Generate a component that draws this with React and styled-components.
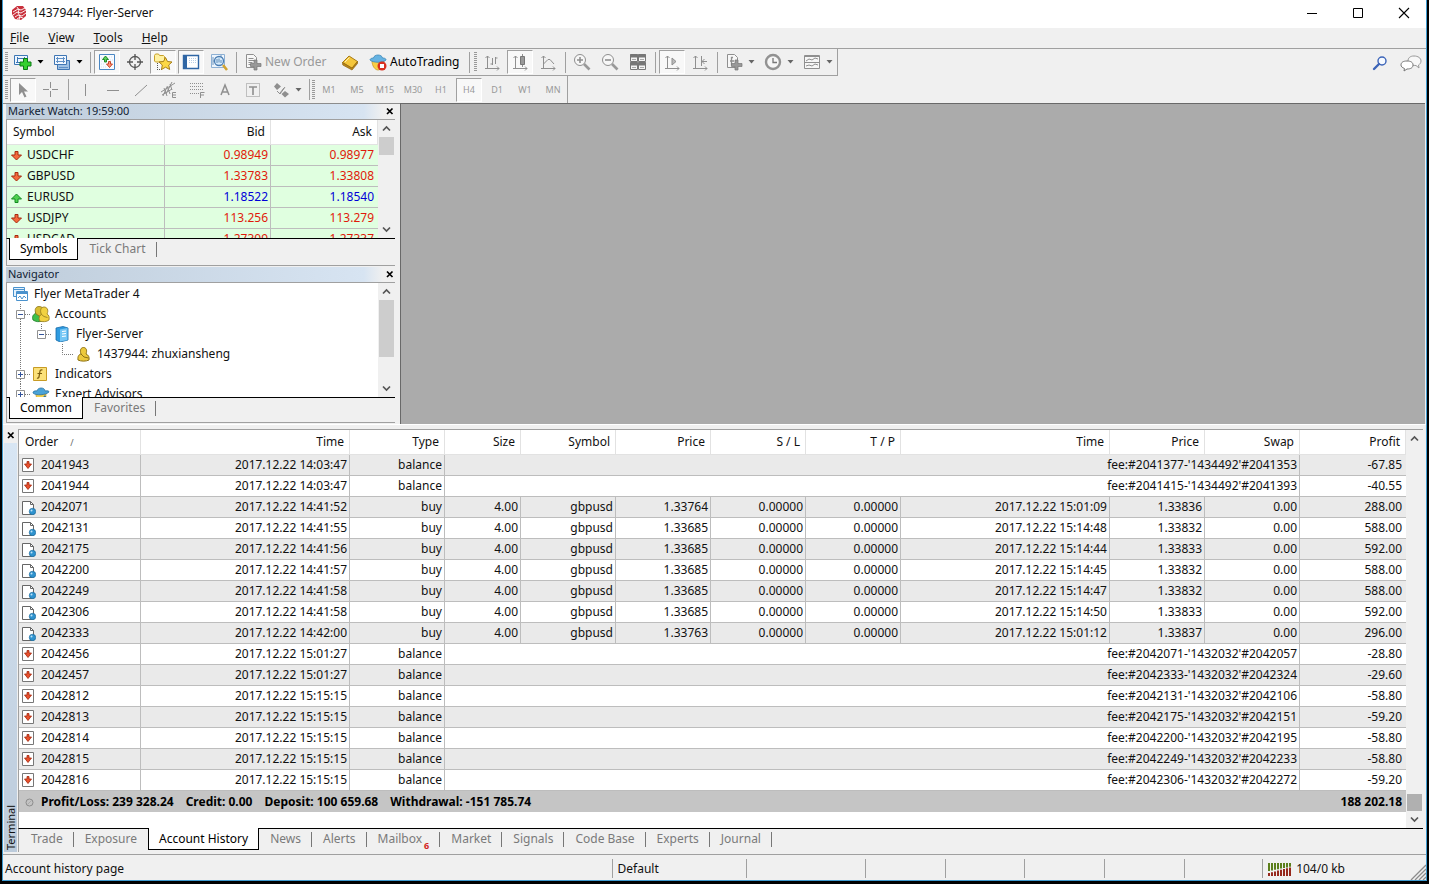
import React from "react";
import styled, { createGlobalStyle, css } from "styled-components";

const Global = createGlobalStyle`
  * { box-sizing: border-box; }
  body { margin: 0; background: #000; color: #111; font: 12px/20px "Noto Sans", "Noto Sans CJK SC", sans-serif; }
  button { font: inherit; color: inherit; background: none; border: 0; padding: 0; margin: 0; }
  table { border-collapse: separate; border-spacing: 0; table-layout: fixed; width: 100%; }
  ul { list-style: none; margin: 0; padding: 0; }
  svg { display: block; flex: none; }
`;

/* ---------- icons ---------- */
const Svg = ({ s = 18, w, h, children, ...rest }) => (
  <svg width={w || s} height={h || s} viewBox={`0 0 ${w || s} ${h || s}`} fill="none" aria-hidden="true" {...rest}>{children}</svg>
);
const G = "#8f8f8f";

const icons = {
  logo: (
    <Svg s={16}>
      <path d="M1 5 6 1l6 0 3 4v6l-5 4-6-1-3-5z" fill="#c9303c" />
      <path d="M2 7l5-3 3 1 4-2M2 10l4-3 4 1 5-3M4 12l3-2 4 1 4-3M6 14l3-2 3 1M6 2l2 3-1 3 2 3-1 4" stroke="#fff" strokeWidth=".9" />
    </Svg>
  ),
  newChart: (
    <Svg>
      <path d="M.5 2.500h13v9H.5z" fill="#eef6ff" stroke="#3c77b5" />
      <path d="M2 9.500h7M3.500 4v6M3 5.500h7M10.500 4v3" stroke="#3c77b5" />
      <path d="M9.500 5.500h4v3.500h3.500v4h-3.500v3.500h-4V13H6V9h3.500z" fill="#35d02f" stroke="#0a7a14" />
    </Svg>
  ),
  profiles: (
    <Svg>
      <path d="M4.500 7.500h12v9h-12z" fill="#9fc1e4" stroke="#3f76b4" />
      <path d="M1.500 2.500h12v9h-12z" fill="#f2f8ff" stroke="#3f76b4" />
      <path d="M4.500 4v6M10.500 4v6M3 5.500h9M3 8.500h9M6 14.500h9" stroke="#5f90c6" />
    </Svg>
  ),
  marketWatch: (
    <Svg>
      <path d="M1.500 1.500h15v15h-15z" fill="#f8fbff" stroke="#4a87c3" />
      <path d="M3 5h3M3 8h2M3 11h4M3 14h5M11 4h4M12 7h3" stroke="#d2e0ee" strokeDasharray="1 1" />
      <path d="M7.500 3 4.500 6.500h2V9h2V6.500h2z" fill="#5ad05a" stroke="#128018" strokeWidth=".9" />
      <path d="M11.500 14.500 8.500 11h2V8.500h2V11h2z" fill="#ff9478" stroke="#c23a1c" strokeWidth=".9" />
    </Svg>
  ),
  dataWindow: (
    <Svg>
      <circle cx="9" cy="9" r="5.500" stroke="#555" strokeWidth="1.300" />
      <path d="M9 1v6M9 11v6M1 9h6M11 9h6" stroke="#555" strokeWidth="1.300" />
    </Svg>
  ),
  navigator: (
    <Svg s={20}>
      <path d="M1.500 3.500l1-1.500h3l1 1.500h4l1 1v4l-1 1.500h-8l-1-1z" fill="#fff1a0" stroke="#c7a12a" />
      <path d="M4.500 11v7M4 17.500h5" stroke="#555" strokeDasharray="1 1" />
      <path d="m12.500 5.500 2 4 4.500.500-3.300 3 1 4.500-4.200-2.300-4 2.300.8-4.500-3.300-3 4.500-.5z" fill="#fcd845" stroke="#a8801a" />
    </Svg>
  ),
  terminal: (
    <Svg>
      <path d="M1.500 2.500h15v13h-15z" fill="#fff" stroke="#2f66a5" strokeWidth="1.400" />
      <path d="M2 3h3v12H2z" fill="#2f66a5" />
      <path d="M7 5.500h8M7 7.500h8M7 9.500h8" stroke="#b9cfe6" strokeDasharray="1 1" />
    </Svg>
  ),
  tester: (
    <Svg s={20}>
      <path d="M2.500 2.500h13v13h-13z" fill="#edf5fd" stroke="#8db0d4" />
      <path d="M4 5v8M4 9h4M12 3v4" stroke="#7196bd" />
      <circle cx="10" cy="9" r="4.500" fill="#d7ebfb" stroke="#4a7db2" strokeWidth="1.300" />
      <path d="M8 7v4M10 6.500v4M12 8v3" stroke="#5d8ab6" />
      <path d="m14 13 4 5" stroke="#d2a32f" strokeWidth="2.600" />
    </Svg>
  ),
  newOrder: (
    <Svg>
      <path d="M2.500 1.500h7l3 3v10h-10z" fill="#f7f7f7" stroke={G} />
      <path d="M4.500 5.500h5M4.500 7.500h6M4.500 9.500h4M4.500 11.500h3" stroke={G} />
      <path d="M10 7h3v3.500h4v3h-4V17h-3v-3.500H6.500v-3H10z" fill="#999" stroke="#777" strokeWidth=".7" />
    </Svg>
  ),
  book: (
    <Svg>
      <path d="M1.500 9.500 8 3l8.500 5.500-5.500 7z" fill="#f4c63c" stroke="#a87a12" />
      <path d="m1.500 9.500.3 2.500 9.200 5 5.500-6.500V8.500L11 15z" fill="#b98518" stroke="#8e640e" strokeWidth=".7" />
      <path d="m4 9 4.500-4.500" stroke="#fdeeb0" />
    </Svg>
  ),
  auto: (
    <Svg>
      <path d="M3 8c0 5 3 9 6 9s6-4 6-9z" fill="#f8cf45" stroke="#c39320" strokeWidth=".7" />
      <path d="M4.500 5C5 1 13 1 13.500 5c3 0 3.500 1 3.500 2-3 3-13 3-16 0 0-1 1-2 3.500-2z" fill="#66b3e2" stroke="#3a86b8" strokeWidth=".8" />
      <circle cx="13" cy="13" r="4.500" fill="#d9301f" /><path d="M11 11h4v4h-4z" fill="#fff" />
    </Svg>
  ),
  bars: (
    <Svg><path d="M4.500 3v12.500H16M2.500 5l2-2 2 2M14 13.500l2 2-2 2M9.500 5v7M9.500 11h-2M12.500 4v7M12.500 5h2M2 15.500h3" stroke={G} /></Svg>
  ),
  candles: (
    <Svg><path d="M4.500 3v12.500H16M2.500 5l2-2 2 2M14 13.500l2 2-2 2M2 15.500h3M11.500 1v13" stroke={G} /><path d="M9.500 3.500h4v8h-4z" fill="#999" stroke="#777" /></Svg>
  ),
  line: (
    <Svg><path d="M4.500 3v12.500H16M2.500 5l2-2 2 2M14 13.500l2 2-2 2M2 15.500h3M4.500 11 9 6.500h2L15 11" stroke={G} /></Svg>
  ),
  zoomIn: (
    <Svg><circle cx="7" cy="7" r="5.500" fill="#f7f7f7" stroke={G} /><path d="M4 7h6M7 4v6" stroke={G} strokeWidth="1.600" /><path d="m11 11 5.500 5.500" stroke="#999" strokeWidth="2.600" /></Svg>
  ),
  zoomOut: (
    <Svg><circle cx="7" cy="7" r="5.500" fill="#f7f7f7" stroke={G} /><path d="M4 7h6" stroke={G} strokeWidth="1.600" /><path d="m11 11 5.500 5.500" stroke="#999" strokeWidth="2.600" /></Svg>
  ),
  tile: (
    <Svg>
      <path d="M1.500 1.500h7v7h-7zM9.500 1.500h7v7h-7zM1.500 9.500h7v7h-7zM9.500 9.500h7v7h-7z" fill="#f4f4f4" stroke="#777" />
      <path d="M1 3h16M1 11h16" stroke="#777" strokeWidth="3" /><path d="M3 6.500h4M11 6.500h4M3 14.500h4M11 14.500h4" stroke="#aaa" />
    </Svg>
  ),
  autoScroll: (
    <Svg><path d="M4.500 3v12.500H16M2.500 5l2-2 2 2M14 13.500l2 2-2 2M2 15.500h3" stroke={G} /><path d="m9 5 4 3.500L9 12z" fill="#bbb" stroke={G} /></Svg>
  ),
  shift: (
    <Svg><path d="M4.500 3v12.500H16M2.500 5l2-2 2 2M14 13.500l2 2-2 2M2 15.500h3M10.500 3v10M11 8.500h5M13.500 6 11 8.500l2.500 2.500" stroke={G} /></Svg>
  ),
  indicators: (
    <Svg>
      <path d="M2.500 1.500h7l3 3v10h-10z" fill="#f7f7f7" stroke={G} /><path d="M8 4.500H6.500v8M5 8h4" stroke={G} strokeWidth="1.300" />
      <path d="M10 7h3v3.500h4v3h-4V17h-3v-3.500H6.500v-3H10z" fill="#999" stroke="#777" strokeWidth=".7" />
    </Svg>
  ),
  periods: (
    <Svg><circle cx="9" cy="9" r="7" fill="#f6f6f6" stroke="#929292" strokeWidth="2.400" /><path d="M9 5v4.500h4" stroke="#777" strokeWidth="1.300" /></Svg>
  ),
  templates: (
    <Svg><path d="M1.500 2.500h15v13h-15z" fill="#f7f7f7" stroke={G} /><path d="M2 3.500h14M2 9.500h14" stroke={G} /><path d="m3 8 3-2 3 1 3-2 3 1M3 13l3-1 3 1 3-2 3 1" stroke={G} /></Svg>
  ),
  cursor: (<Svg><path d="M5 2v12l3-3 2.500 5.500 2-1L10 10.500h4z" fill={G} /></Svg>),
  cross: (<Svg><path d="M8.500 1v6M8.500 10v6M1 8.500h6M10 8.500h6" stroke={G} /></Svg>),
  vline: (<Svg><path d="M9.500 3v12" stroke={G} /></Svg>),
  hline: (<Svg><path d="M3 9.500h12" stroke={G} /></Svg>),
  trend: (<Svg><path d="M3 15 15 4" stroke={G} /></Svg>),
  channel: (<Svg><path d="m1 11 14-9M2 14l10-6M4 7l3 8M7 5l3 8M10 3l2 6M3 15l4-9M6 13l6-12" stroke={G} /><path d="M16 11.500h-3.500v5H16M13 14h3" stroke={G} /></Svg>),
  fibo: (<Svg><path d="M2 2.500h14M2 5.500h14M2 8.500h14M2 12.500h9" stroke={G} strokeDasharray="1 1" /><path d="M16.500 11.500h-4V17M13 14h3" stroke={G} /></Svg>),
  text: (<Svg><path d="m5 14 4-10 4 10M6.500 11h5" stroke={G} strokeWidth="1.500" /></Svg>),
  label: (<Svg><path d="M2.500 2.500h13v13h-13z" stroke={G} strokeDasharray="1 1" /><path d="M5 6h8M9 6v8" stroke={G} strokeWidth="1.600" /></Svg>),
  arrows: (<Svg><path d="m5 2 4 3.500-4 3.500-3-3.500zM13 10l4 3-4 3.500-3.500-3.500z" fill={G} /><path d="m8 12 4-5M5 10l3 3 5-7" stroke={G} /></Svg>),
  search: (<Svg s={16}><circle cx="10" cy="6" r="4" fill="#f6faff" stroke="#3c64b8" strokeWidth="1.400" /><path d="m7 9-5 5" stroke="#3c64b8" strokeWidth="2.400" strokeLinecap="round" /></Svg>),
  chat: (
    <Svg w={22} h={18}>
      <path d="M14 2c4 0 7 2 7 5 0 2-1 3-2.500 4l.5 3-3-2.500c-5 0-8-2-8-4.500 0-3 2-5 6-5z" fill="#f8f8f8" stroke="#999" />
      <path d="M7 7c4 0 6 1.500 6 4s-2 4-6 4l-3 2 .5-2.500C2 13.500 1 12.500 1 11c0-2.500 2-4 6-4z" fill="#fff" stroke="#777" />
    </Svg>
  ),
  down: (<Svg w={11} h={11}><path d="M4 1.500h3V5h3.500L5.500 10 .5 5H4z" fill="#f36a3c" stroke="#a72a10" /></Svg>),
  up: (<Svg w={11} h={11}><path d="M4 10.500h3V7h3.500L5.500 2 .5 7H4z" fill="#4fd04f" stroke="#128a20" /></Svg>),
  root: (
    <Svg s={16}>
      <path d="M.5 1.500h11v9H.5z" fill="#e4f2fd" stroke="#4a92cd" /><path d="M.5 3.500h11" stroke="#4a92cd" />
      <path d="M3.500 5.500h11v9h-11z" fill="#fff" stroke="#4a92cd" /><path d="M3.500 7h11" stroke="#4a92cd" strokeWidth="2" /><path d="m5 12 2-2 2 3 2-3 2 2" stroke="#4a92cd" />
    </Svg>
  ),
  accounts: (
    <Svg>
      <path d="M1 15c-1.500-4 1-6 2.500-6.500 0-2 1-3 3-3s3 2 2.500 4L10 16c-3 1-6 1-9-1z" fill="#3fbf4a" stroke="#1b7b25" strokeWidth=".8" />
      <path d="M4 9C2 4 4 1.500 7 1.500s4 1.500 4 4l-1 7z" fill="#d8bd32" stroke="#8d7414" strokeWidth=".8" />
      <path d="M7.500 16c-1-4 0-5.500 2-6.500-2-4-.5-7.500 2.500-7.500s5 3 3 7c2 1 2.500 3 2 6-2 2-7 2-9.500 1z" fill="#f2d241" stroke="#92771a" strokeWidth=".8" />
      <path d="m9.500 9.500 2.500 2 3.500 1" stroke="#92771a" strokeWidth=".8" />
    </Svg>
  ),
  server: (
    <Svg s={16}>
      <path d="M2 2 9 .5 14 2v12l-8 2-4-2z" fill="#2f9be0" stroke="#186ba8" strokeWidth=".8" /><path d="M6 3.500 13.500 2v12L6 15.500z" fill="#74c6f5" />
      <path d="M8 5.500 12 5M8 8l4-.5M8 10.500l4-.5" stroke="#fff" strokeWidth="1.200" />
    </Svg>
  ),
  user: (
    <Svg s={16}>
      <path d="M2 14c-.5-4 1-5.500 3-6C3.500 4 5 1.500 7.500 1.500S11.500 4 10 8c2.500 1 3.500 3 3 6-3 1.500-8 1.500-11 0z" fill="#ecc93d" stroke="#8d7114" />
      <path d="m5 8 3 3 4.500 1" stroke="#8d7114" />
    </Svg>
  ),
  fn: (
    <Svg s={16}><path d="M1.500 1.500h13v13h-13z" fill="#fbe17a" stroke="#c79b25" /><path d="M10.500 4c-2-.5-2.500.5-2.700 2L7 11c-.3 1-1 1.500-2 1M5.500 7.500H10" stroke="#7a5a0c" strokeWidth="1.200" /></Svg>
  ),
  expert: (
    <Svg>
      <path d="M4 9c0 4 2 7 5 7s5-3 5-7z" fill="#f5d04a" stroke="#b98e20" strokeWidth=".7" />
      <path d="M5 6c.5-4 8-4 8 0 3-.5 4 0 4 1-3 3-13 4-16 1 0-1.500 1-2.500 4-2z" fill="#4aa3d8" stroke="#2c74a3" strokeWidth=".8" /><path d="m12 11 5 5" stroke="#2c74a3" strokeWidth="2" />
    </Svg>
  ),
  balance: (
    <Svg w={14} h={14}><path d="M.5.5h11v13H.5z" fill="#fff" stroke="#777" /><path d="M5 3.500h2V6h2.500L6 10.500 2.500 6H5z" fill="#e8502c" stroke="#a3260c" strokeWidth=".8" /></Svg>
  ),
  trade: (
    <Svg w={14} h={15}><path d="M.5 1.500h8l3 3v10H.5z" fill="#fff" stroke="#666" /><path d="M8.500 1.500v3h3" stroke="#666" /><circle cx="10.500" cy="11.500" r="3.200" fill="#2f93cf" stroke="#1c6a9c" strokeWidth=".7" /><circle cx="9.500" cy="10.500" r="1" fill="#bfe3f7" /></Svg>
  ),
  dot: (<Svg w={14} h={14}><circle cx="7.500" cy="7.500" r="3.500" fill="#c3c3c3" stroke="#8c8c8c" /><path d="m5.500 9.500 4-4" stroke="#aaa" /></Svg>),
  close: (<Svg s={8}><path d="m1 1.500 5.500 5.500M6.500 1.500 1 7" stroke="#000" strokeWidth="1.700" /></Svg>),
  caret: (<Svg w={7} h={4}><path d="M.5 0h6L3.500 3.500z" fill="currentColor" /></Svg>),
  chevUp: (<Svg w={9} h={7}><path d="m1 5.500 3.500-3.500L8 5.500" stroke="#555" strokeWidth="1.700" /></Svg>),
  chevDown: (<Svg w={9} h={7}><path d="m1 1.500 3.500 3.500L8 1.500" stroke="#555" strokeWidth="1.700" /></Svg>),
  min: (<Svg s={12}><path d="M1 6.500h10" stroke="#000" /></Svg>),
  max: (<Svg s={12}><path d="M1.500 1.500h9v9h-9z" stroke="#000" /></Svg>),
  exit: (<Svg s={12}><path d="m1 1 10 10M11 1 1 11" stroke="#000" strokeWidth="1.100" /></Svg>),
  traffic: (
    <Svg w={24} h={14}>
      {[0, 1, 2, 3, 4, 5, 6, 7].map((i) => (
        <React.Fragment key={i}>
          <path d={`M${i * 3 + 1} 1V${9 - i * 0.6}`} stroke="#5c7f1c" strokeWidth="2" />
          <path d={`M${i * 3 + 1} ${11 - i * 0.8}V14`} stroke="#96281c" strokeWidth="2" />
        </React.Fragment>
      ))}
    </Svg>
  ),
  sizer: (<Svg s={16}><path d="M1 16 16 1M5 16 16 5M9 16 16 9M13 16l3-3" stroke="#8c8c8c" strokeWidth="1.300" /></Svg>),
};

const guides = {
  blank: null,
  line: <path d="M10.500 0v20" />,
  corner: <path d="M10.500 0v10.500H21" />,
  minus: <path d="M10.500 0v6M15 10.500h6" />,
  minusLine: <path d="M10.500 0v6M10.500 15v5M15 10.500h6" />,
  plusLine: <path d="M10.500 0v6M10.500 15v5M15 10.500h6" />,
};
const Guide = ({ type }) => (
  <Svg w={21} h={20}>
    <g stroke="#777" strokeDasharray="1 1">{guides[type]}</g>
    {/inus|plus/.test(type) && <path d="M6.500 6.500h8v8h-8z" fill="#fff" stroke="#919191" />}
    {/inus|plus/.test(type) && <path d="M8 10.500h5" stroke="#33549c" />}
    {/plus/.test(type) && <path d="M10.500 8v5" stroke="#33549c" />}
  </Svg>
);

/* ---------- window frame ---------- */
const Win = styled.div`
  margin: 0 2px 3px 2px; min-height: calc(100vh - 3px); background: #f0f0f0;
  border: solid #3f9bd0; border-width: 0 1px 1px; display: flex; flex-direction: column;
`;
const TitleBar = styled.header`
  display: flex; align-items: center; height: 28px; padding: 0 2px 3px 8px; background: #fff; gap: 5px;
`;
const Title = styled.h1`font: inherit; margin: 0; flex: 1;`;
const WinButton = styled.button`width: 41px; height: 25px; display: grid; place-items: center;`;
const MenuBar = styled.nav`display: flex; height: 21px; padding: 0 7px; gap: 19px; border-bottom: 1px solid #a0a0a0;`;
const MenuItem = styled.button`&::first-letter { text-decoration: underline; }`;

const ToolLine = styled.div`display: flex; justify-content: space-between; height: 27px;`;
const ToolGroup = styled.div`
  display: flex; align-items: center; height: 27px; color: ${(p) => (p.$dim ? "#666" : "#000")};
  border: solid #a0a0a0; border-width: 0 1px ${(p) => (p.$flat ? 0 : 1)}px 0;
`;
const Grip = styled.span`
  width: 3px; height: 20px; margin: 0 ${(p) => (p.$tight ? 0 : 1)}px 0 ${(p) => (p.$tight ? 0 : 2)}px;
  background: repeating-linear-gradient(#999 0 1px, #f0f0f0 1px 2px);
`;
const Sep = styled.span`width: 1px; height: 21px; margin: 0 2px 0 3px; background: #a0a0a0;`;
const Tool = styled.button`
  width: 28px; height: 24px; display: grid; place-items: center; flex: none;
  ${(p) => p.$on && css`
    width: 26px; margin: 0 1px; background: #f8f8f8; border: 1px solid; border-color: #a0a0a0 #fff #fff #a0a0a0;
  `}
`;
const Drop = styled.button`
  width: 11px; height: 24px; display: flex; align-items: center; color: ${(p) => (p.$dim ? "#666" : "inherit")};
`;
const TextTool = styled.button`
  display: flex; align-items: center; width: ${(p) => p.$w}px; height: 24px; padding-left: 5px; gap: 3px;
  font-size: 12px; color: ${(p) => (p.disabled ? "#999" : "#000")}; white-space: nowrap;
`;
const Period = styled(Tool)`font-size: 9px; line-height: 12px; color: #999;`;
const Right = styled.div`display: flex; align-items: center; gap: 12px; padding-right: 4px;`;

/* ---------- docked panels ---------- */
const Work = styled.main`display: flex; padding-right: 1px;`;
const Dock = styled.aside`width: 397px; flex: none; padding: 0 5px 0 3px; border-top: 1px solid #8c8c8c;`;
const Canvas = styled.section`flex: 1; background: #ababab; border: solid #696969; border-width: 1px 0 0 1px;`;
const Panel = styled.section`border-bottom: 1px solid #a0a0a0; margin-bottom: 1px;`;
const PanelTitle = styled.h2`
  margin: 0; height: 15px; display: flex; align-items: center; justify-content: space-between;
  padding: 0 1px 1px 2px; font: 11px/14px "Noto Sans", sans-serif; color: #123;
  background: linear-gradient(90deg, #bfcddb, #d7e4f2 92%, #f0f0f0 97%);
`;
const CloseButton = styled.button`width: 8px; height: 8px; display: block;`;
const View = styled.div`
  display: flex; height: ${(p) => (p.$h ? `${p.$h}px` : "auto")}; overflow: hidden; background: #fff;
  border: solid #a0a0a0; border-width: 1px 0 0 1px;
`;
const Fill = styled.div`flex: 1; min-width: 0; overflow: hidden;`;
const Tree = styled.ul`flex: 1; && { padding-top: 1px; }`;
const ScrollBar = styled.div`
  width: 17px; flex: none; display: flex; flex-direction: column; background: #f0f0f0;
`;
const ScrollButton = styled.button`height: 17px; flex: none; display: grid; place-items: center;`;
const Thumb = styled.div`
  flex: none; height: ${(p) => p.$h}px; margin: 0 1px; background: ${(p) => (p.$end ? "#b0b0b0" : "#cdcdcd")};
`;
const Spring = styled.div`flex: 1;`;

const Tabs = styled.nav`
  display: flex; align-items: flex-start; height: ${(p) => p.$h}px; padding-left: ${(p) => (p.$flush ? 1 : 2)}px;
  border-left: 1px solid #a0a0a0; border-top: 1px solid #000; color: #7a7a7a;
`;
const Tab = styled.button`
  display: flex; padding: 0 11px; height: 21px; line-height: 20px; white-space: nowrap; position: relative;
  ${(p) => p.$on ? css`
    background: #fff; color: #000; border: solid #000; border-width: 0 1px 1px; margin-top: -1px; height: 22px; padding: 1px 10px 0;
  ` : css`
    &::after { content: ""; position: absolute; right: 0; top: 3px; height: 15px; border-right: 1px solid #777; }
  `}
  ${(p) => p.$plain && css`&::after { display: none; }`}
`;
const Badge = styled.sub`color: #d32020; font: bold 9px/12px "Noto Sans", sans-serif; align-self: flex-end; margin: 0 0 -2px 2px;`;

/* ---------- data ---------- */
const Th = styled.th`
  font-weight: 400; height: ${(p) => p.$h}px; padding: 0 5px 0 6px; text-align: ${(p) => (p.$left ? "left" : "right")};
  background: #fff; border: solid #e2e2e2; border-width: 0 1px 1px 0; white-space: pre;
`;
const SortMark = styled.span`font-size: 9px; color: #666; margin-left: 12px;`;
const Td = styled.td`
  height: 21px; padding: 0 ${(p) => p.$pad ?? 2}px 0 ${(p) => (p.$left ? 3 : 2)}px; line-height: 20px;
  text-align: ${(p) => (p.$left ? "left" : "right")}; border: solid #bdbdbd;
  border-width: 0 ${(p) => (p.$end ? 0 : 1)}px 1px 0; white-space: nowrap; color: ${(p) => p.$c || "inherit"};
`;
const Quote = styled.tr`background: #e0ffe0; td:first-child { padding-left: 4px; }`;
const Deal = styled.tr`background: #fff; &:nth-child(odd) { background: #eaeaea; }`;
const Cell = styled.span`display: flex; align-items: center; gap: 5px;`;
const TreeRow = styled.li`display: flex; align-items: center; height: 20px; padding-left: 3px;`;
const TreeIcon = styled.span`width: 24px; height: 20px; display: grid; align-items: center; padding-left: ${(p) => p.$x}px;`;

const Terminal = styled.section`display: flex; padding: 4px 3px 2px 0; border-top: 1px solid #fff;`;
const Rail = styled.div`
  width: 15px; display: flex; flex-direction: column; align-items: center; padding-top: 2px;
`;
const RailName = styled.h2`
  flex: 1; width: 13px; margin: 4px 0 0; font: 11px/13px "Noto Sans", sans-serif; writing-mode: vertical-rl; transform: rotate(180deg);
  background: linear-gradient(#bccbdb, #d8e6f4); color: #111; padding-top: 2px;
`;
const TermBody = styled.div`flex: 1; min-width: 0;`;
const Summary = styled.div`
  display: flex; align-items: center; height: 21px; padding: 0 4px 0 3px; gap: 5px; background: #c5c5c5;
  margin-bottom: 16px; font-weight: 700; color: #000;
`;
const Totals = styled.div`flex: 1; display: flex; gap: 12px;`;

const Status = styled.footer`
  display: flex; align-items: stretch; flex: 1; min-height: 25px; border-top: 1px solid #a0a0a0; padding-left: 2px;
`;
const Slot = styled.span`
  display: flex; align-items: center; gap: 4px; padding-right: 4px; margin: 4px 0 2px; white-space: nowrap; line-height: 18px;
  flex: ${(p) => p.$w} 1 ${(p) => p.$w}px; & + & { border-left: 1px solid #a0a0a0; padding-left: 5px; }
`;
const SizeGrip = styled.span`flex: none; align-self: flex-end; width: 16px;`;

const quotes = [
  ["USDCHF", "0.98949", "0.98977"], ["GBPUSD", "1.33783", "1.33808"], ["EURUSD", "1.18522", "1.18540", true],
  ["USDJPY", "113.256", "113.279"], ["USDCAD", "1.27309", "1.27337"],
];
const tree = [
  [[], "root", "Flyer MetaTrader 4"],
  [["minusLine"], "accounts", "Accounts"],
  [["line", "minus"], "server", "Flyer-Server"],
  [["line", "blank", "corner"], "user", "1437944: zhuxiansheng"],
  [["plusLine"], "fn", "Indicators"],
  [["plusLine"], "expert", "Expert Advisors"],
];
const iconInset = { root: 3, accounts: 1, server: 2, user: 3, fn: 1, expert: 1 };
const cols = [
  ["Order", 122], ["Time", 209], ["Type", 95], ["Size", 76], ["Symbol", 95], ["Price", 95], ["S / L", 95],
  ["T / P", 95], ["Time", 209], ["Price", 95], ["Swap", 95], ["Profit", 106],
];
const fee = (id, time, note, profit) => ({ id, time, note, profit });
const buy = (id, time, open, closed, close, profit) => ({
  id, time, profit, cells: ["4.00", "gbpusd", open, "0.00000", "0.00000", `2017.12.22 ${closed}`, close, "0.00"],
});
const deals = [
  fee(2041943, "14:03:47", "fee:#2041377-'1434492'#2041353", "-67.85"),
  fee(2041944, "14:03:47", "fee:#2041415-'1434492'#2041393", "-40.55"),
  buy(2042071, "14:41:52", "1.33764", "15:01:09", "1.33836", "288.00"),
  buy(2042131, "14:41:55", "1.33685", "15:14:48", "1.33832", "588.00"),
  buy(2042175, "14:41:56", "1.33685", "15:14:44", "1.33833", "592.00"),
  buy(2042200, "14:41:57", "1.33685", "15:14:45", "1.33832", "588.00"),
  buy(2042249, "14:41:58", "1.33685", "15:14:47", "1.33832", "588.00"),
  buy(2042306, "14:41:58", "1.33685", "15:14:50", "1.33833", "592.00"),
  buy(2042333, "14:42:00", "1.33763", "15:01:12", "1.33837", "296.00"),
  fee(2042456, "15:01:27", "fee:#2042071-'1432032'#2042057", "-28.80"),
  fee(2042457, "15:01:27", "fee:#2042333-'1432032'#2042324", "-29.60"),
  fee(2042812, "15:15:15", "fee:#2042131-'1432032'#2042106", "-58.80"),
  fee(2042813, "15:15:15", "fee:#2042175-'1432032'#2042151", "-59.20"),
  fee(2042814, "15:15:15", "fee:#2042200-'1432032'#2042195", "-58.80"),
  fee(2042815, "15:15:15", "fee:#2042249-'1432032'#2042233", "-58.80"),
  fee(2042816, "15:15:15", "fee:#2042306-'1432032'#2042272", "-59.20"),
];
const totals = ["Profit/Loss: 239 328.24", "Credit: 0.00", "Deposit: 100 659.68", "Withdrawal: -151 785.74"];
const termTabs = ["Trade", "Exposure", "Account History", "News", "Alerts", "Mailbox", "Market", "Signals", "Code Base", "Experts", "Journal"];

const T = ({ i, on }) => <Tool $on={on} aria-label={i}>{icons[i]}</Tool>;
const D = ({ dim }) => <Drop $dim={dim} aria-label="more">{icons.caret}</Drop>;
const Scroll = ({ size, end }) => (
  <ScrollBar>
    <ScrollButton aria-label="Scroll up">{icons.chevUp}</ScrollButton>
    {end && <Spring />}
    <Thumb $h={size} $end={end} />
    {!end && <Spring />}
    <ScrollButton aria-label="Scroll down">{icons.chevDown}</ScrollButton>
  </ScrollBar>
);

export default function App() {
  return (
    <Win>
      <Global />
      <TitleBar>
        {icons.logo}
        <Title>1437944: Flyer-Server</Title>
        <WinButton aria-label="Minimize">{icons.min}</WinButton>
        <WinButton aria-label="Maximize">{icons.max}</WinButton>
        <WinButton aria-label="Close">{icons.exit}</WinButton>
      </TitleBar>
      <MenuBar>
        {["File", "View", "Tools", "Help"].map((m) => <MenuItem key={m}>{m}</MenuItem>)}
      </MenuBar>
      <ToolLine>
        <ToolGroup>
          <Grip /><T i="newChart" /><D /><T i="profiles" /><D /><Sep />
          <T i="marketWatch" on /><T i="dataWindow" /><T i="navigator" on /><T i="terminal" on /><T i="tester" /><Sep />
          <TextTool $w={97} disabled>{icons.newOrder}New Order</TextTool>
          <T i="book" />
          <TextTool $w={102}>{icons.auto}AutoTrading</TextTool>
          <Sep /><Grip />
          <T i="bars" /><T i="candles" on /><T i="line" /><Sep />
          <T i="zoomIn" /><T i="zoomOut" /><T i="tile" /><Sep />
          <T i="autoScroll" on /><T i="shift" /><Sep />
          <T i="indicators" /><D dim /><T i="periods" /><D dim /><T i="templates" /><D dim />
        </ToolGroup>
        <Right>
          <button aria-label="Search">{icons.search}</button>
          <button aria-label="Chat">{icons.chat}</button>
        </Right>
      </ToolLine>
      <ToolLine>
        <ToolGroup $dim $flat>
          <Grip /><T i="cursor" on /><T i="cross" /><Sep />
          {["vline", "hline", "trend", "channel", "fibo", "text", "label", "arrows"].map((i) => <T key={i} i={i} />)}
          <D /><Sep /><Grip $tight />
          {["M1", "M5", "M15", "M30", "H1", "H4", "D1", "W1", "MN"].map((p) => <Period key={p} $on={p === "H4"}>{p}</Period>)}
        </ToolGroup>
      </ToolLine>
      <Work>
        <Dock>
          <Panel>
            <PanelTitle>Market Watch: 19:59:00<CloseButton aria-label="Close">{icons.close}</CloseButton></PanelTitle>
            <View $h={119}>
              <Fill>
                <table>
                  <colgroup><col width="158" /><col width="106" /><col width="107" /></colgroup>
                  <thead><tr><Th $h={25} $left>Symbol</Th><Th $h={25}>Bid</Th><Th $h={25}>Ask</Th></tr></thead>
                  <tbody>
                    {quotes.map(([s, b, a, up]) => (
                      <Quote key={s}>
                        <Td $left><Cell>{up ? icons.up : icons.down}{s}</Cell></Td>
                        <Td $c={up ? "#0000d8" : "#e01a0a"}>{b}</Td>
                        <Td $pad={4} $end $c={up ? "#0000d8" : "#e01a0a"}>{a}</Td>
                      </Quote>
                    ))}
                  </tbody>
                </table>
              </Fill>
              <Scroll size={18} />
            </View>
            <Tabs $h={27}><Tab $on>Symbols</Tab><Tab>Tick Chart</Tab></Tabs>
          </Panel>
          <Panel>
            <PanelTitle>Navigator<CloseButton aria-label="Close">{icons.close}</CloseButton></PanelTitle>
            <View $h={115}>
              <Tree>
                {tree.map(([g, icon, name]) => (
                  <TreeRow key={name}>
                    {g.map((t, n) => <Guide key={n} type={t} />)}
                    <TreeIcon $x={iconInset[icon]}>{icons[icon]}</TreeIcon>{name}
                  </TreeRow>
                ))}
              </Tree>
              <Scroll size={57} />
            </View>
            <Tabs $h={25}><Tab $on>Common</Tab><Tab>Favorites</Tab></Tabs>
          </Panel>
        </Dock>
        <Canvas />
      </Work>
      <Terminal>
        <Rail>
          <CloseButton aria-label="Close">{icons.close}</CloseButton>
          <RailName>Terminal</RailName>
        </Rail>
        <TermBody>
          <View>
            <Fill>
              <table>
                <colgroup>{cols.map(([, w], n) => <col key={n} width={w} />)}</colgroup>
                <thead>
                  <tr>
                    {cols.map(([c], n) => <Th key={n} $h={25} $left={!n}>{c}{!n && <SortMark>/</SortMark>}</Th>)}
                  </tr>
                </thead>
                <tbody>
                  {deals.map((d) => (
                    <Deal key={d.id}>
                      <Td $left><Cell>{d.note ? icons.balance : icons.trade}{d.id}</Cell></Td>
                      <Td>2017.12.22 {d.time}</Td>
                      <Td>{d.note ? "balance" : "buy"}</Td>
                      {d.note ? <Td colSpan={8}>{d.note}</Td> : d.cells.map((c, n) => <Td key={n}>{c}</Td>)}
                      <Td $pad={4} $end>{d.profit}</Td>
                    </Deal>
                  ))}
                </tbody>
              </table>
              <Summary>
                {icons.dot}
                <Totals>{totals.map((t) => <span key={t}>{t}</span>)}</Totals>
                <span>188 202.18</span>
              </Summary>
            </Fill>
            <Scroll size={17} end />
          </View>
          <Tabs $h={24} $flush>
            {termTabs.map((t, n) => (
              <Tab key={t} $on={n === 2} $plain={n === 1}>{t}{t === "Mailbox" && <Badge>6</Badge>}</Tab>
            ))}
          </Tabs>
        </TermBody>
      </Terminal>
      <Status>
        <Slot $w={607}>Account history page</Slot>
        <Slot $w={135}>Default</Slot>
        <Slot $w={119} /><Slot $w={80} /><Slot $w={79} /><Slot $w={80} /><Slot $w={80} /><Slot $w={78} />
        <Slot $w={148}>{icons.traffic}104/0 kb</Slot>
        <SizeGrip>{icons.sizer}</SizeGrip>
      </Status>
    </Win>
  );
}
